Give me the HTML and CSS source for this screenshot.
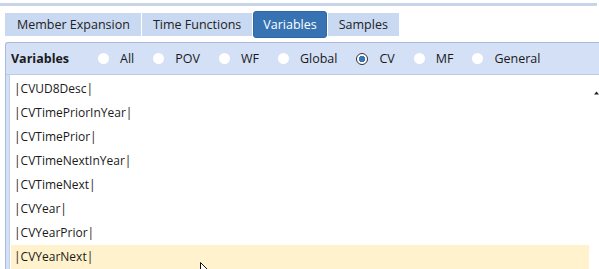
FILE: index.html
```html
<!DOCTYPE html>
<html lang="en">
<head>
  <meta charset="UTF-8">
  <title>Variables</title>
  <link rel="stylesheet" href="styles.css">
</head>
<body>
  <div class="topbar"></div>

  <div class="tabs">
    <div class="tab">Member Expansion</div>
    <div class="tab">Time Functions</div>
    <div class="tab active">Variables</div>
    <div class="tab">Samples</div>
  </div>

  <div class="panel">
    <div class="panel-head">
      <span class="title">Variables</span>
      <label class="radio"><span class="dot"></span>All</label>
      <label class="radio"><span class="dot"></span>POV</label>
      <label class="radio"><span class="dot"></span>WF</label>
      <label class="radio"><span class="dot"></span>Global</label>
      <label class="radio checked"><span class="dot"></span>CV</label>
      <label class="radio"><span class="dot"></span>MF</label>
      <label class="radio"><span class="dot"></span>General</label>
    </div>
    <div class="list-wrap">
      <ul class="list">
        <li>|CVUD8Desc|</li>
        <li>|CVTimePriorInYear|</li>
        <li>|CVTimePrior|</li>
        <li>|CVTimeNextInYear|</li>
        <li>|CVTimeNext|</li>
        <li>|CVYear|</li>
        <li>|CVYearPrior|</li>
        <li class="hover">|CVYearNext|</li>
      </ul>
      <div class="scrollbar">
        <svg width="5" height="4" viewBox="0 0 5 4"><path d="M0 3.5 L2.5 0.5 L5 3.5 Z" fill="#222"/></svg>
      </div>
    </div>
  </div>

  <svg class="cursor" width="12" height="14" viewBox="0 0 12 14">
    <path d="M0.5 0.5 L0.5 11 L3 8.5 L5 13 L6.5 12.3 L4.6 8 L8 8 Z" fill="#fff" stroke="#111" stroke-width="1"/>
  </svg>
</body>
</html>
```

FILE: styles.css
```css
* {
  margin: 0;
  padding: 0;
  box-sizing: border-box;
}

body {
  font-family: 'Open Sans', 'Noto Sans', sans-serif;
  font-size: 12px;
  color: #1a1a1a;
  background: #fff;
  width: 599px;
  height: 269px;
  overflow: hidden;
  position: relative;
}

.topbar {
  height: 3px;
  margin-top: 3px;
  margin-right: 2px;
  background: #c7d4ea;
}

.tabs {
  display: flex;
  align-items: center;
  gap: 1px;
  margin: 4px 0 0 5px;
  height: 28px;
  font-size: 12.5px;
}

.tab {
  height: 23px;
  line-height: 23px;
  padding: 0 11px;
  background: #c9d9f2;
  color: #222;
}

.tab:first-child {
  padding-left: 12px;
}

.tab.active {
  height: 27px;
  line-height: 25px;
  padding: 0 9px;
  background: #3772b2;
  color: #fff;
  border-radius: 3px;
  border: 1px solid #2f66a3;
}

.panel {
  margin: 4px 0 0 5px;
  border: 1px solid #a9bbd8;
  border-right: none;
  border-radius: 3px 0 0 0;
  background: #d4e0f6;
  height: 240px;
}

.panel-head {
  display: flex;
  align-items: center;
  height: 32px;
  padding-left: 5px;
  border-bottom: 1px solid #bccbe4;
  font-size: 12.5px;
}

.title {
  font-weight: 700;
  width: 87px;
}

.radio {
  display: flex;
  align-items: center;
  margin-right: 19px;
}

.dot {
  width: 11px;
  height: 11px;
  border-radius: 50%;
  background: #fff;
  margin-right: 11px;
}

.radio.checked .dot {
  width: 12px;
  height: 12px;
  border: 1px solid #333;
  background: radial-gradient(circle, #3a73b6 3px, #fff 3.5px);
}

.list-wrap {
  display: flex;
  margin-left: 3px;
  height: 200px;
  background: #fff;
  border-left: 1px solid #c2d0e8;
}

.list {
  list-style: none;
  flex: 1;
  padding-top: 2px;
}

.list li {
  height: 24px;
  line-height: 24px;
  padding-left: 3px;
  margin-left: 1px;
}

.list li.hover {
  background: #fff2cc;
}

.scrollbar {
  width: 10px;
  padding: 16px 0 0 5px;
}

.scrollbar svg {
  display: block;
}

.cursor {
  position: absolute;
  left: 200px;
  top: 262px;
}
```
